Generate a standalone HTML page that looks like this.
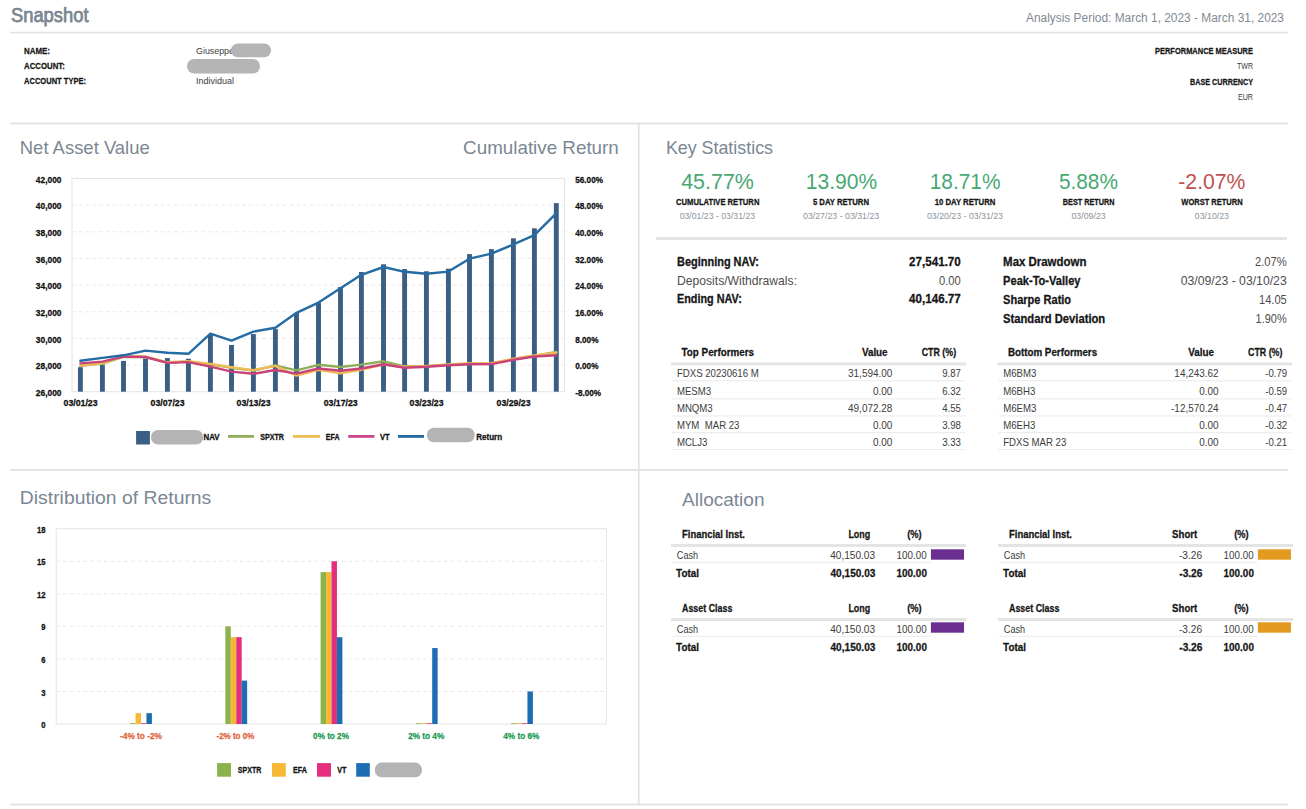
<!DOCTYPE html>
<html><head><meta charset="utf-8"><title>Snapshot</title>
<style>
html,body{margin:0;padding:0;background:#fff;}
body{width:1306px;height:809px;overflow:hidden;font-family:"Liberation Sans",sans-serif;}
svg{display:block;font-family:"Liberation Sans",sans-serif;}
</style></head><body>
<svg width="1306" height="809" viewBox="0 0 1306 809">
<rect width="1306" height="809" fill="#fff"/>
<text x="10.90" y="22.30" font-size="20.349" font-weight="400" fill="#7a858f" textLength="77.69" lengthAdjust="spacingAndGlyphs" stroke="#7a858f" stroke-width="0.75" stroke-linejoin="round">Snapshot</text>
<text x="1026.00" y="21.90" font-size="12.500" font-weight="400" fill="#7f8a94" textLength="258.00" lengthAdjust="spacingAndGlyphs">Analysis Period: March 1, 2023 - March 31, 2023</text>
<rect x="10.00" y="31.80" width="1278.00" height="1.50" fill="#e2e2e2"/>
<text x="24.00" y="53.90" font-size="9.738" font-weight="700" fill="#161616" textLength="25.90" lengthAdjust="spacingAndGlyphs" stroke="#161616" stroke-width="0.28" stroke-linejoin="round">NAME:</text>
<text x="24.00" y="68.90" font-size="9.738" font-weight="700" fill="#161616" textLength="40.80" lengthAdjust="spacingAndGlyphs" stroke="#161616" stroke-width="0.28" stroke-linejoin="round">ACCOUNT:</text>
<text x="24.00" y="84.20" font-size="9.738" font-weight="700" fill="#161616" textLength="62.00" lengthAdjust="spacingAndGlyphs" stroke="#161616" stroke-width="0.28" stroke-linejoin="round">ACCOUNT TYPE:</text>
<text x="196.00" y="54.00" font-size="9.012" font-weight="400" fill="#3c3c3c" textLength="38.00" lengthAdjust="spacingAndGlyphs">Giuseppe</text>
<rect x="231.00" y="43.60" width="40.00" height="13.60" fill="#b4b4b4" rx="6.8"/>
<rect x="187.00" y="59.00" width="73.00" height="14.50" fill="#b4b4b4" rx="7.2"/>
<text x="196.00" y="84.20" font-size="9.012" font-weight="400" fill="#3c3c3c" textLength="38.00" lengthAdjust="spacingAndGlyphs">Individual</text>
<text x="1155.00" y="53.70" font-size="9.738" font-weight="700" fill="#161616" textLength="98.00" lengthAdjust="spacingAndGlyphs" stroke="#161616" stroke-width="0.28" stroke-linejoin="round">PERFORMANCE MEASURE</text>
<text x="1237.00" y="69.00" font-size="9.012" font-weight="400" fill="#3c3c3c" textLength="16.00" lengthAdjust="spacingAndGlyphs">TWR</text>
<text x="1190.00" y="84.60" font-size="9.738" font-weight="700" fill="#161616" textLength="63.00" lengthAdjust="spacingAndGlyphs" stroke="#161616" stroke-width="0.28" stroke-linejoin="round">BASE CURRENCY</text>
<text x="1238.00" y="100.00" font-size="9.012" font-weight="400" fill="#3c3c3c" textLength="15.00" lengthAdjust="spacingAndGlyphs">EUR</text>
<rect x="10.00" y="122.60" width="1278.00" height="1.80" fill="#e2e2e2"/>
<rect x="10.00" y="469.00" width="1278.00" height="1.90" fill="#e2e2e2"/>
<rect x="10.00" y="803.60" width="1278.00" height="1.80" fill="#e2e2e2"/>
<rect x="638.00" y="124.00" width="1.60" height="680.00" fill="#e2e2e2"/>
<text x="19.80" y="153.90" font-size="19.041" font-weight="400" fill="#7b8793" textLength="129.90" lengthAdjust="spacingAndGlyphs">Net Asset Value</text>
<text x="463.10" y="154.10" font-size="19.041" font-weight="400" fill="#7b8793" textLength="155.71" lengthAdjust="spacingAndGlyphs">Cumulative Return</text>
<rect x="72.00" y="178.50" width="492.50" height="213.20" fill="none" stroke="#e4e4e4" stroke-width="1"/>
<line x1="72.00" y1="205.15" x2="564.00" y2="205.15" stroke="#e8e8e8" stroke-width="1.00" stroke-dasharray="3.7 3.1"/>
<line x1="72.00" y1="231.80" x2="564.00" y2="231.80" stroke="#e8e8e8" stroke-width="1.00" stroke-dasharray="3.7 3.1"/>
<line x1="72.00" y1="258.45" x2="564.00" y2="258.45" stroke="#e8e8e8" stroke-width="1.00" stroke-dasharray="3.7 3.1"/>
<line x1="72.00" y1="285.10" x2="564.00" y2="285.10" stroke="#e8e8e8" stroke-width="1.00" stroke-dasharray="3.7 3.1"/>
<line x1="72.00" y1="311.75" x2="564.00" y2="311.75" stroke="#e8e8e8" stroke-width="1.00" stroke-dasharray="3.7 3.1"/>
<line x1="72.00" y1="338.40" x2="564.00" y2="338.40" stroke="#e8e8e8" stroke-width="1.00" stroke-dasharray="3.7 3.1"/>
<line x1="72.00" y1="365.05" x2="564.00" y2="365.05" stroke="#e8e8e8" stroke-width="1.00" stroke-dasharray="3.7 3.1"/>
<text x="35.86" y="182.60" font-size="9.012" font-weight="700" fill="#111" textLength="25.63" lengthAdjust="spacingAndGlyphs" stroke="#111" stroke-width="0.28" stroke-linejoin="round">42,000</text>
<text x="35.86" y="209.25" font-size="9.012" font-weight="700" fill="#111" textLength="25.63" lengthAdjust="spacingAndGlyphs" stroke="#111" stroke-width="0.28" stroke-linejoin="round">40,000</text>
<text x="35.86" y="235.90" font-size="9.012" font-weight="700" fill="#111" textLength="25.63" lengthAdjust="spacingAndGlyphs" stroke="#111" stroke-width="0.28" stroke-linejoin="round">38,000</text>
<text x="35.86" y="262.55" font-size="9.012" font-weight="700" fill="#111" textLength="25.63" lengthAdjust="spacingAndGlyphs" stroke="#111" stroke-width="0.28" stroke-linejoin="round">36,000</text>
<text x="35.86" y="289.20" font-size="9.012" font-weight="700" fill="#111" textLength="25.63" lengthAdjust="spacingAndGlyphs" stroke="#111" stroke-width="0.28" stroke-linejoin="round">34,000</text>
<text x="35.86" y="315.85" font-size="9.012" font-weight="700" fill="#111" textLength="25.63" lengthAdjust="spacingAndGlyphs" stroke="#111" stroke-width="0.28" stroke-linejoin="round">32,000</text>
<text x="35.86" y="342.50" font-size="9.012" font-weight="700" fill="#111" textLength="25.63" lengthAdjust="spacingAndGlyphs" stroke="#111" stroke-width="0.28" stroke-linejoin="round">30,000</text>
<text x="35.86" y="369.15" font-size="9.012" font-weight="700" fill="#111" textLength="25.63" lengthAdjust="spacingAndGlyphs" stroke="#111" stroke-width="0.28" stroke-linejoin="round">28,000</text>
<text x="35.86" y="395.80" font-size="9.012" font-weight="700" fill="#111" textLength="25.63" lengthAdjust="spacingAndGlyphs" stroke="#111" stroke-width="0.28" stroke-linejoin="round">26,000</text>
<text x="575.20" y="182.60" font-size="9.012" font-weight="700" fill="#111" textLength="27.81" lengthAdjust="spacingAndGlyphs" stroke="#111" stroke-width="0.28" stroke-linejoin="round">56.00%</text>
<text x="575.20" y="209.25" font-size="9.012" font-weight="700" fill="#111" textLength="27.81" lengthAdjust="spacingAndGlyphs" stroke="#111" stroke-width="0.28" stroke-linejoin="round">48.00%</text>
<text x="575.20" y="235.90" font-size="9.012" font-weight="700" fill="#111" textLength="27.81" lengthAdjust="spacingAndGlyphs" stroke="#111" stroke-width="0.28" stroke-linejoin="round">40.00%</text>
<text x="575.20" y="262.55" font-size="9.012" font-weight="700" fill="#111" textLength="27.81" lengthAdjust="spacingAndGlyphs" stroke="#111" stroke-width="0.28" stroke-linejoin="round">32.00%</text>
<text x="575.20" y="289.20" font-size="9.012" font-weight="700" fill="#111" textLength="27.81" lengthAdjust="spacingAndGlyphs" stroke="#111" stroke-width="0.28" stroke-linejoin="round">24.00%</text>
<text x="575.20" y="315.85" font-size="9.012" font-weight="700" fill="#111" textLength="27.81" lengthAdjust="spacingAndGlyphs" stroke="#111" stroke-width="0.28" stroke-linejoin="round">16.00%</text>
<text x="575.20" y="342.50" font-size="9.012" font-weight="700" fill="#111" textLength="23.25" lengthAdjust="spacingAndGlyphs" stroke="#111" stroke-width="0.28" stroke-linejoin="round">8.00%</text>
<text x="575.20" y="369.15" font-size="9.012" font-weight="700" fill="#111" textLength="23.25" lengthAdjust="spacingAndGlyphs" stroke="#111" stroke-width="0.28" stroke-linejoin="round">0.00%</text>
<text x="575.20" y="395.80" font-size="9.012" font-weight="700" fill="#111" textLength="25.98" lengthAdjust="spacingAndGlyphs" stroke="#111" stroke-width="0.28" stroke-linejoin="round">-8.00%</text>
<rect x="77.95" y="367.20" width="4.90" height="24.50" fill="#3b5f84"/>
<rect x="99.95" y="364.40" width="4.90" height="27.30" fill="#3b5f84"/>
<rect x="121.05" y="360.90" width="4.90" height="30.80" fill="#3b5f84"/>
<rect x="143.05" y="358.50" width="4.90" height="33.20" fill="#3b5f84"/>
<rect x="164.95" y="358.10" width="4.90" height="33.60" fill="#3b5f84"/>
<rect x="185.95" y="358.80" width="4.90" height="32.90" fill="#3b5f84"/>
<rect x="207.95" y="335.00" width="4.90" height="56.70" fill="#3b5f84"/>
<rect x="229.05" y="345.00" width="4.90" height="46.70" fill="#3b5f84"/>
<rect x="250.95" y="334.10" width="4.90" height="57.60" fill="#3b5f84"/>
<rect x="272.95" y="329.10" width="4.90" height="62.60" fill="#3b5f84"/>
<rect x="294.05" y="313.00" width="4.90" height="78.70" fill="#3b5f84"/>
<rect x="316.05" y="302.60" width="4.90" height="89.10" fill="#3b5f84"/>
<rect x="338.05" y="287.00" width="4.90" height="104.70" fill="#3b5f84"/>
<rect x="358.95" y="272.00" width="4.90" height="119.70" fill="#3b5f84"/>
<rect x="381.05" y="264.30" width="4.90" height="127.40" fill="#3b5f84"/>
<rect x="402.15" y="269.10" width="4.90" height="122.60" fill="#3b5f84"/>
<rect x="423.95" y="271.30" width="4.90" height="120.40" fill="#3b5f84"/>
<rect x="445.95" y="268.70" width="4.90" height="123.00" fill="#3b5f84"/>
<rect x="467.05" y="254.10" width="4.90" height="137.60" fill="#3b5f84"/>
<rect x="488.95" y="249.10" width="4.90" height="142.60" fill="#3b5f84"/>
<rect x="510.95" y="238.30" width="4.90" height="153.40" fill="#3b5f84"/>
<rect x="531.95" y="228.30" width="4.90" height="163.40" fill="#3b5f84"/>
<rect x="553.85" y="203.10" width="4.90" height="188.60" fill="#3b5f84"/>
<text x="63.62" y="405.50" font-size="8.721" font-weight="700" fill="#111" textLength="33.95" lengthAdjust="spacingAndGlyphs" stroke="#111" stroke-width="0.28" stroke-linejoin="round">03/01/23</text>
<text x="150.62" y="405.50" font-size="8.721" font-weight="700" fill="#111" textLength="33.95" lengthAdjust="spacingAndGlyphs" stroke="#111" stroke-width="0.28" stroke-linejoin="round">03/07/23</text>
<text x="236.62" y="405.50" font-size="8.721" font-weight="700" fill="#111" textLength="33.95" lengthAdjust="spacingAndGlyphs" stroke="#111" stroke-width="0.28" stroke-linejoin="round">03/13/23</text>
<text x="323.72" y="405.50" font-size="8.721" font-weight="700" fill="#111" textLength="33.95" lengthAdjust="spacingAndGlyphs" stroke="#111" stroke-width="0.28" stroke-linejoin="round">03/17/23</text>
<text x="409.62" y="405.50" font-size="8.721" font-weight="700" fill="#111" textLength="33.95" lengthAdjust="spacingAndGlyphs" stroke="#111" stroke-width="0.28" stroke-linejoin="round">03/23/23</text>
<text x="496.62" y="405.50" font-size="8.721" font-weight="700" fill="#111" textLength="33.95" lengthAdjust="spacingAndGlyphs" stroke="#111" stroke-width="0.28" stroke-linejoin="round">03/29/23</text>
<path d="M80.40 365.90 L102.40 363.50 L123.50 356.80 L145.50 357.00 L167.40 362.60 L188.40 361.60 L210.40 364.40 L231.50 367.80 L253.40 370.60 L275.40 365.40 L296.50 370.30 L318.50 364.80 L340.50 367.00 L361.40 364.60 L383.50 361.30 L404.60 366.30 L426.40 366.30 L448.40 364.80 L469.50 363.80 L491.40 363.60 L513.40 359.20 L534.40 356.00 L556.30 351.90" fill="none" stroke="#8fae5a" stroke-width="2.40" stroke-linejoin="round" stroke-linecap="round"/>
<path d="M80.40 365.60 L102.40 363.20 L123.50 356.40 L145.50 356.60 L167.40 362.30 L188.40 361.30 L210.40 363.90 L231.50 367.20 L253.40 370.20 L275.40 365.90 L296.50 375.60 L318.50 369.80 L340.50 373.40 L361.40 369.70 L383.50 364.60 L404.60 366.80 L426.40 366.00 L448.40 364.50 L469.50 363.50 L491.40 363.30 L513.40 358.80 L534.40 355.50 L556.30 352.70" fill="none" stroke="#efbc55" stroke-width="2.40" stroke-linejoin="round" stroke-linecap="round"/>
<path d="M80.40 363.40 L102.40 361.60 L123.50 356.60 L145.50 357.00 L167.40 362.90 L188.40 362.10 L210.40 366.60 L231.50 371.60 L253.40 373.80 L275.40 370.00 L296.50 373.60 L318.50 368.50 L340.50 370.80 L361.40 368.50 L383.50 364.20 L404.60 367.80 L426.40 366.80 L448.40 365.30 L469.50 364.30 L491.40 364.10 L513.40 359.80 L534.40 356.50 L556.30 355.20" fill="none" stroke="#c9437a" stroke-width="2.40" stroke-linejoin="round" stroke-linecap="round"/>
<path d="M80.40 360.80 L102.40 357.90 L123.50 355.30 L145.50 350.60 L167.40 352.70 L188.40 353.80 L210.40 333.60 L231.50 340.60 L253.40 331.60 L275.40 327.70 L296.50 312.80 L318.50 302.60 L340.50 288.20 L361.40 274.80 L383.50 267.00 L404.60 271.80 L426.40 273.80 L448.40 271.60 L469.50 258.70 L491.40 253.70 L513.40 244.40 L534.40 235.20 L556.30 213.40" fill="none" stroke="#246ca3" stroke-width="2.40" stroke-linejoin="round" stroke-linecap="round"/>
<rect x="136.10" y="431.00" width="13.80" height="13.50" fill="#3b5f84"/>
<rect x="151.00" y="430.00" width="52.20" height="14.50" fill="#b4b4b4" rx="7.0"/>
<text x="203.50" y="439.60" font-size="9.012" font-weight="700" fill="#111" textLength="16.10" lengthAdjust="spacingAndGlyphs" stroke="#111" stroke-width="0.28" stroke-linejoin="round">NAV</text>
<rect x="228.00" y="435.00" width="26.00" height="2.80" fill="#8fae5a"/>
<text x="260.20" y="439.60" font-size="9.012" font-weight="700" fill="#111" textLength="23.80" lengthAdjust="spacingAndGlyphs" stroke="#111" stroke-width="0.28" stroke-linejoin="round">SPXTR</text>
<rect x="293.00" y="435.00" width="27.00" height="2.80" fill="#efbc55"/>
<text x="325.80" y="439.60" font-size="9.012" font-weight="700" fill="#111" textLength="13.80" lengthAdjust="spacingAndGlyphs" stroke="#111" stroke-width="0.28" stroke-linejoin="round">EFA</text>
<rect x="348.30" y="435.00" width="26.10" height="2.80" fill="#c9468b"/>
<text x="380.00" y="439.60" font-size="9.012" font-weight="700" fill="#111" textLength="9.70" lengthAdjust="spacingAndGlyphs" stroke="#111" stroke-width="0.28" stroke-linejoin="round">VT</text>
<rect x="398.00" y="435.00" width="26.00" height="2.80" fill="#2469a0"/>
<rect x="426.90" y="427.70" width="47.80" height="14.50" fill="#b4b4b4" rx="7.0"/>
<text x="476.20" y="439.60" font-size="9.012" font-weight="700" fill="#111" textLength="26.00" lengthAdjust="spacingAndGlyphs" stroke="#111" stroke-width="0.28" stroke-linejoin="round">Return</text>
<text x="665.90" y="153.70" font-size="18.314" font-weight="400" fill="#7b8793" textLength="107.10" lengthAdjust="spacingAndGlyphs">Key Statistics</text>
<text x="681.20" y="188.50" font-size="21.512" font-weight="400" fill="#47a873" textLength="72.69" lengthAdjust="spacingAndGlyphs">45.77%</text>
<text x="676.00" y="204.60" font-size="9.012" font-weight="700" fill="#161616" textLength="83.40" lengthAdjust="spacingAndGlyphs" stroke="#161616" stroke-width="0.28" stroke-linejoin="round">CUMULATIVE RETURN</text>
<text x="679.70" y="219.40" font-size="8.140" font-weight="400" fill="#8b949c" textLength="75.40" lengthAdjust="spacingAndGlyphs">03/01/23 - 03/31/23</text>
<text x="805.80" y="188.50" font-size="21.512" font-weight="400" fill="#47a873" textLength="71.39" lengthAdjust="spacingAndGlyphs">13.90%</text>
<text x="812.90" y="204.60" font-size="9.012" font-weight="700" fill="#161616" textLength="56.10" lengthAdjust="spacingAndGlyphs" stroke="#161616" stroke-width="0.28" stroke-linejoin="round">5 DAY RETURN</text>
<text x="803.00" y="219.40" font-size="8.140" font-weight="400" fill="#8b949c" textLength="76.20" lengthAdjust="spacingAndGlyphs">03/27/23 - 03/31/23</text>
<text x="929.70" y="188.50" font-size="21.512" font-weight="400" fill="#47a873" textLength="70.79" lengthAdjust="spacingAndGlyphs">18.71%</text>
<text x="934.70" y="204.60" font-size="9.012" font-weight="700" fill="#161616" textLength="60.70" lengthAdjust="spacingAndGlyphs" stroke="#161616" stroke-width="0.28" stroke-linejoin="round">10 DAY RETURN</text>
<text x="927.00" y="219.40" font-size="8.140" font-weight="400" fill="#8b949c" textLength="76.00" lengthAdjust="spacingAndGlyphs">03/20/23 - 03/31/23</text>
<text x="1058.90" y="188.50" font-size="21.512" font-weight="400" fill="#47a873" textLength="59.11" lengthAdjust="spacingAndGlyphs">5.88%</text>
<text x="1062.80" y="204.60" font-size="9.012" font-weight="700" fill="#161616" textLength="51.80" lengthAdjust="spacingAndGlyphs" stroke="#161616" stroke-width="0.28" stroke-linejoin="round">BEST RETURN</text>
<text x="1071.40" y="219.40" font-size="8.140" font-weight="400" fill="#8b949c" textLength="34.30" lengthAdjust="spacingAndGlyphs">03/09/23</text>
<text x="1178.30" y="188.50" font-size="21.512" font-weight="400" fill="#bd5250" textLength="67.11" lengthAdjust="spacingAndGlyphs">-2.07%</text>
<text x="1181.30" y="204.60" font-size="9.012" font-weight="700" fill="#161616" textLength="61.30" lengthAdjust="spacingAndGlyphs" stroke="#161616" stroke-width="0.28" stroke-linejoin="round">WORST RETURN</text>
<text x="1194.80" y="219.40" font-size="8.140" font-weight="400" fill="#8b949c" textLength="34.20" lengthAdjust="spacingAndGlyphs">03/10/23</text>
<rect x="656.00" y="237.00" width="631.00" height="3.00" fill="#e4e4e4"/>
<text x="677.00" y="265.80" font-size="11.919" font-weight="700" fill="#161616" textLength="82.00" lengthAdjust="spacingAndGlyphs" stroke="#161616" stroke-width="0.28" stroke-linejoin="round">Beginning NAV:</text>
<text x="677.00" y="284.50" font-size="11.919" font-weight="400" fill="#4d4d4d" textLength="120.00" lengthAdjust="spacingAndGlyphs">Deposits/Withdrawals:</text>
<text x="677.00" y="303.30" font-size="11.919" font-weight="700" fill="#161616" textLength="64.80" lengthAdjust="spacingAndGlyphs" stroke="#161616" stroke-width="0.28" stroke-linejoin="round">Ending NAV:</text>
<text x="909.10" y="265.80" font-size="11.919" font-weight="700" fill="#161616" textLength="51.70" lengthAdjust="spacingAndGlyphs" stroke="#161616" stroke-width="0.28" stroke-linejoin="round">27,541.70</text>
<text x="939.00" y="284.50" font-size="11.919" font-weight="400" fill="#4d4d4d" textLength="21.80" lengthAdjust="spacingAndGlyphs">0.00</text>
<text x="909.10" y="303.30" font-size="11.919" font-weight="700" fill="#161616" textLength="51.70" lengthAdjust="spacingAndGlyphs" stroke="#161616" stroke-width="0.28" stroke-linejoin="round">40,146.77</text>
<text x="1003.10" y="266.00" font-size="11.919" font-weight="700" fill="#161616" textLength="83.30" lengthAdjust="spacingAndGlyphs" stroke="#161616" stroke-width="0.28" stroke-linejoin="round">Max Drawdown</text>
<text x="1003.10" y="284.80" font-size="11.919" font-weight="700" fill="#161616" textLength="77.40" lengthAdjust="spacingAndGlyphs" stroke="#161616" stroke-width="0.28" stroke-linejoin="round">Peak-To-Valley</text>
<text x="1003.10" y="303.90" font-size="11.919" font-weight="700" fill="#161616" textLength="68.00" lengthAdjust="spacingAndGlyphs" stroke="#161616" stroke-width="0.28" stroke-linejoin="round">Sharpe Ratio</text>
<text x="1003.10" y="322.70" font-size="11.919" font-weight="700" fill="#161616" textLength="102.10" lengthAdjust="spacingAndGlyphs" stroke="#161616" stroke-width="0.28" stroke-linejoin="round">Standard Deviation</text>
<text x="1255.00" y="266.00" font-size="11.919" font-weight="400" fill="#4d4d4d" textLength="31.71" lengthAdjust="spacingAndGlyphs">2.07%</text>
<text x="1180.70" y="284.80" font-size="11.919" font-weight="400" fill="#4d4d4d" textLength="106.00" lengthAdjust="spacingAndGlyphs">03/09/23 - 03/10/23</text>
<text x="1259.00" y="303.90" font-size="11.919" font-weight="400" fill="#4d4d4d" textLength="27.71" lengthAdjust="spacingAndGlyphs">14.05</text>
<text x="1255.60" y="322.70" font-size="11.919" font-weight="400" fill="#4d4d4d" textLength="31.10" lengthAdjust="spacingAndGlyphs">1.90%</text>
<text x="681.60" y="355.50" font-size="11.483" font-weight="700" fill="#161616" textLength="72.40" lengthAdjust="spacingAndGlyphs" stroke="#161616" stroke-width="0.28" stroke-linejoin="round">Top Performers</text>
<text x="861.90" y="355.50" font-size="11.483" font-weight="700" fill="#161616" textLength="25.70" lengthAdjust="spacingAndGlyphs" stroke="#161616" stroke-width="0.28" stroke-linejoin="round">Value</text>
<text x="921.70" y="355.50" font-size="11.483" font-weight="700" fill="#161616" textLength="34.40" lengthAdjust="spacingAndGlyphs" stroke="#161616" stroke-width="0.28" stroke-linejoin="round">CTR (%)</text>
<rect x="671.00" y="362.40" width="295.00" height="3.00" fill="#e4e4e4"/>
<text x="676.90" y="376.70" font-size="10.465" font-weight="400" fill="#3c3c3c" textLength="81.88" lengthAdjust="spacingAndGlyphs">FDXS 20230616 M</text>
<text x="848.07" y="376.70" font-size="10.465" font-weight="400" fill="#3c3c3c" textLength="44.23" lengthAdjust="spacingAndGlyphs">31,594.00</text>
<text x="942.16" y="376.70" font-size="10.465" font-weight="400" fill="#3c3c3c" textLength="18.74" lengthAdjust="spacingAndGlyphs">9.87</text>
<rect x="672.00" y="380.20" width="293.00" height="1.10" fill="#ececec"/>
<text x="676.90" y="394.80" font-size="10.465" font-weight="400" fill="#3c3c3c" textLength="34.24" lengthAdjust="spacingAndGlyphs">MESM3</text>
<text x="872.95" y="394.80" font-size="10.465" font-weight="400" fill="#3c3c3c" textLength="19.35" lengthAdjust="spacingAndGlyphs">0.00</text>
<text x="942.16" y="394.80" font-size="10.465" font-weight="400" fill="#3c3c3c" textLength="18.74" lengthAdjust="spacingAndGlyphs">6.32</text>
<rect x="672.00" y="398.30" width="293.00" height="1.10" fill="#ececec"/>
<text x="676.90" y="411.90" font-size="10.465" font-weight="400" fill="#3c3c3c" textLength="35.84" lengthAdjust="spacingAndGlyphs">MNQM3</text>
<text x="848.07" y="411.90" font-size="10.465" font-weight="400" fill="#3c3c3c" textLength="44.23" lengthAdjust="spacingAndGlyphs">49,072.28</text>
<text x="942.16" y="411.90" font-size="10.465" font-weight="400" fill="#3c3c3c" textLength="18.74" lengthAdjust="spacingAndGlyphs">4.55</text>
<rect x="672.00" y="415.40" width="293.00" height="1.10" fill="#ececec"/>
<text x="676.90" y="428.60" font-size="10.465" font-weight="400" fill="#3c3c3c" textLength="62.59" lengthAdjust="spacingAndGlyphs">MYM  MAR 23</text>
<text x="872.95" y="428.60" font-size="10.465" font-weight="400" fill="#3c3c3c" textLength="19.35" lengthAdjust="spacingAndGlyphs">0.00</text>
<text x="942.16" y="428.60" font-size="10.465" font-weight="400" fill="#3c3c3c" textLength="18.74" lengthAdjust="spacingAndGlyphs">3.98</text>
<rect x="672.00" y="432.10" width="293.00" height="1.10" fill="#ececec"/>
<text x="676.90" y="445.50" font-size="10.465" font-weight="400" fill="#3c3c3c" textLength="30.50" lengthAdjust="spacingAndGlyphs">MCLJ3</text>
<text x="872.95" y="445.50" font-size="10.465" font-weight="400" fill="#3c3c3c" textLength="19.35" lengthAdjust="spacingAndGlyphs">0.00</text>
<text x="942.16" y="445.50" font-size="10.465" font-weight="400" fill="#3c3c3c" textLength="18.74" lengthAdjust="spacingAndGlyphs">3.33</text>
<rect x="672.00" y="449.00" width="293.00" height="1.10" fill="#ececec"/>
<text x="1007.90" y="355.50" font-size="11.483" font-weight="700" fill="#161616" textLength="89.20" lengthAdjust="spacingAndGlyphs" stroke="#161616" stroke-width="0.28" stroke-linejoin="round">Bottom Performers</text>
<text x="1188.20" y="355.50" font-size="11.483" font-weight="700" fill="#161616" textLength="25.70" lengthAdjust="spacingAndGlyphs" stroke="#161616" stroke-width="0.28" stroke-linejoin="round">Value</text>
<text x="1248.00" y="355.50" font-size="11.483" font-weight="700" fill="#161616" textLength="34.40" lengthAdjust="spacingAndGlyphs" stroke="#161616" stroke-width="0.28" stroke-linejoin="round">CTR (%)</text>
<rect x="997.30" y="362.40" width="295.00" height="3.00" fill="#e4e4e4"/>
<text x="1003.20" y="376.70" font-size="10.465" font-weight="400" fill="#3c3c3c" textLength="33.17" lengthAdjust="spacingAndGlyphs">M6BM3</text>
<text x="1174.37" y="376.70" font-size="10.465" font-weight="400" fill="#3c3c3c" textLength="44.23" lengthAdjust="spacingAndGlyphs">14,243.62</text>
<text x="1265.26" y="376.70" font-size="10.465" font-weight="400" fill="#3c3c3c" textLength="21.95" lengthAdjust="spacingAndGlyphs">-0.79</text>
<rect x="998.30" y="380.20" width="293.00" height="1.10" fill="#ececec"/>
<text x="1003.20" y="394.80" font-size="10.465" font-weight="400" fill="#3c3c3c" textLength="32.10" lengthAdjust="spacingAndGlyphs">M6BH3</text>
<text x="1199.25" y="394.80" font-size="10.465" font-weight="400" fill="#3c3c3c" textLength="19.35" lengthAdjust="spacingAndGlyphs">0.00</text>
<text x="1265.26" y="394.80" font-size="10.465" font-weight="400" fill="#3c3c3c" textLength="21.95" lengthAdjust="spacingAndGlyphs">-0.59</text>
<rect x="998.30" y="398.30" width="293.00" height="1.10" fill="#ececec"/>
<text x="1003.20" y="411.90" font-size="10.465" font-weight="400" fill="#3c3c3c" textLength="33.17" lengthAdjust="spacingAndGlyphs">M6EM3</text>
<text x="1171.06" y="411.90" font-size="10.465" font-weight="400" fill="#3c3c3c" textLength="47.54" lengthAdjust="spacingAndGlyphs">-12,570.24</text>
<text x="1265.26" y="411.90" font-size="10.465" font-weight="400" fill="#3c3c3c" textLength="21.95" lengthAdjust="spacingAndGlyphs">-0.47</text>
<rect x="998.30" y="415.40" width="293.00" height="1.10" fill="#ececec"/>
<text x="1003.20" y="428.60" font-size="10.465" font-weight="400" fill="#3c3c3c" textLength="32.10" lengthAdjust="spacingAndGlyphs">M6EH3</text>
<text x="1199.25" y="428.60" font-size="10.465" font-weight="400" fill="#3c3c3c" textLength="19.35" lengthAdjust="spacingAndGlyphs">0.00</text>
<text x="1265.26" y="428.60" font-size="10.465" font-weight="400" fill="#3c3c3c" textLength="21.95" lengthAdjust="spacingAndGlyphs">-0.32</text>
<rect x="998.30" y="432.10" width="293.00" height="1.10" fill="#ececec"/>
<text x="1003.20" y="445.50" font-size="10.465" font-weight="400" fill="#3c3c3c" textLength="63.13" lengthAdjust="spacingAndGlyphs">FDXS MAR 23</text>
<text x="1199.25" y="445.50" font-size="10.465" font-weight="400" fill="#3c3c3c" textLength="19.35" lengthAdjust="spacingAndGlyphs">0.00</text>
<text x="1265.26" y="445.50" font-size="10.465" font-weight="400" fill="#3c3c3c" textLength="21.95" lengthAdjust="spacingAndGlyphs">-0.21</text>
<rect x="998.30" y="449.00" width="293.00" height="1.10" fill="#ececec"/>
<text x="19.80" y="503.90" font-size="18.023" font-weight="400" fill="#7b8793" textLength="191.50" lengthAdjust="spacingAndGlyphs">Distribution of Returns</text>
<rect x="56.20" y="528.70" width="550.20" height="195.30" fill="none" stroke="#e4e4e4" stroke-width="1"/>
<line x1="56.20" y1="691.45" x2="605.90" y2="691.45" stroke="#e8e8e8" stroke-width="1.00" stroke-dasharray="3.7 3.1"/>
<line x1="56.20" y1="658.90" x2="605.90" y2="658.90" stroke="#e8e8e8" stroke-width="1.00" stroke-dasharray="3.7 3.1"/>
<line x1="56.20" y1="626.35" x2="605.90" y2="626.35" stroke="#e8e8e8" stroke-width="1.00" stroke-dasharray="3.7 3.1"/>
<line x1="56.20" y1="593.80" x2="605.90" y2="593.80" stroke="#e8e8e8" stroke-width="1.00" stroke-dasharray="3.7 3.1"/>
<line x1="56.20" y1="561.25" x2="605.90" y2="561.25" stroke="#e8e8e8" stroke-width="1.00" stroke-dasharray="3.7 3.1"/>
<text x="41.34" y="728.10" font-size="9.012" font-weight="700" fill="#111" textLength="4.26" lengthAdjust="spacingAndGlyphs" stroke="#111" stroke-width="0.28" stroke-linejoin="round">0</text>
<text x="41.34" y="695.55" font-size="9.012" font-weight="700" fill="#111" textLength="4.26" lengthAdjust="spacingAndGlyphs" stroke="#111" stroke-width="0.28" stroke-linejoin="round">3</text>
<text x="41.34" y="663.00" font-size="9.012" font-weight="700" fill="#111" textLength="4.26" lengthAdjust="spacingAndGlyphs" stroke="#111" stroke-width="0.28" stroke-linejoin="round">6</text>
<text x="41.34" y="630.45" font-size="9.012" font-weight="700" fill="#111" textLength="4.26" lengthAdjust="spacingAndGlyphs" stroke="#111" stroke-width="0.28" stroke-linejoin="round">9</text>
<text x="37.08" y="597.90" font-size="9.012" font-weight="700" fill="#111" textLength="8.52" lengthAdjust="spacingAndGlyphs" stroke="#111" stroke-width="0.28" stroke-linejoin="round">12</text>
<text x="37.08" y="565.35" font-size="9.012" font-weight="700" fill="#111" textLength="8.52" lengthAdjust="spacingAndGlyphs" stroke="#111" stroke-width="0.28" stroke-linejoin="round">15</text>
<text x="37.08" y="532.80" font-size="9.012" font-weight="700" fill="#111" textLength="8.52" lengthAdjust="spacingAndGlyphs" stroke="#111" stroke-width="0.28" stroke-linejoin="round">18</text>
<rect x="130.10" y="723.20" width="5.45" height="0.80" fill="#8cb24b"/>
<rect x="135.55" y="713.15" width="5.45" height="10.85" fill="#f6b836"/>
<rect x="141.00" y="723.20" width="5.45" height="0.80" fill="#e4307c"/>
<rect x="146.45" y="713.15" width="5.45" height="10.85" fill="#1d6db2"/>
<rect x="225.35" y="626.35" width="5.45" height="97.65" fill="#8cb24b"/>
<rect x="230.80" y="637.20" width="5.45" height="86.80" fill="#f6b836"/>
<rect x="236.25" y="637.20" width="5.45" height="86.80" fill="#e4307c"/>
<rect x="241.70" y="680.60" width="5.45" height="43.40" fill="#1d6db2"/>
<rect x="320.60" y="572.10" width="5.45" height="151.90" fill="#8cb24b"/>
<rect x="326.05" y="572.10" width="5.45" height="151.90" fill="#f6b836"/>
<rect x="331.50" y="561.25" width="5.45" height="162.75" fill="#e4307c"/>
<rect x="336.95" y="637.20" width="5.45" height="86.80" fill="#1d6db2"/>
<rect x="415.85" y="723.20" width="5.45" height="0.80" fill="#8cb24b"/>
<rect x="421.30" y="723.20" width="5.45" height="0.80" fill="#f6b836"/>
<rect x="426.75" y="723.20" width="5.45" height="0.80" fill="#e4307c"/>
<rect x="432.20" y="648.05" width="5.45" height="75.95" fill="#1d6db2"/>
<rect x="511.10" y="723.20" width="5.45" height="0.80" fill="#8cb24b"/>
<rect x="516.55" y="723.20" width="5.45" height="0.80" fill="#f6b836"/>
<rect x="522.00" y="723.20" width="5.45" height="0.80" fill="#e4307c"/>
<rect x="527.45" y="691.45" width="5.45" height="32.55" fill="#1d6db2"/>
<text x="120.00" y="738.70" font-size="9.012" font-weight="700" fill="#e0643c" textLength="42.00" lengthAdjust="spacingAndGlyphs" stroke="#e0643c" stroke-width="0.28" stroke-linejoin="round">-4% to -2%</text>
<text x="216.50" y="738.70" font-size="9.012" font-weight="700" fill="#e0643c" textLength="37.80" lengthAdjust="spacingAndGlyphs" stroke="#e0643c" stroke-width="0.28" stroke-linejoin="round">-2% to 0%</text>
<text x="313.10" y="738.70" font-size="9.012" font-weight="700" fill="#20994f" textLength="35.80" lengthAdjust="spacingAndGlyphs" stroke="#20994f" stroke-width="0.28" stroke-linejoin="round">0% to 2%</text>
<text x="408.15" y="738.70" font-size="9.012" font-weight="700" fill="#20994f" textLength="36.10" lengthAdjust="spacingAndGlyphs" stroke="#20994f" stroke-width="0.28" stroke-linejoin="round">2% to 4%</text>
<text x="503.25" y="738.70" font-size="9.012" font-weight="700" fill="#20994f" textLength="36.10" lengthAdjust="spacingAndGlyphs" stroke="#20994f" stroke-width="0.28" stroke-linejoin="round">4% to 6%</text>
<rect x="217.10" y="763.10" width="13.90" height="13.60" fill="#8cb24b"/>
<text x="237.80" y="773.20" font-size="9.012" font-weight="700" fill="#111" textLength="23.60" lengthAdjust="spacingAndGlyphs" stroke="#111" stroke-width="0.28" stroke-linejoin="round">SPXTR</text>
<rect x="272.00" y="763.10" width="13.80" height="13.60" fill="#f6b836"/>
<text x="292.90" y="773.20" font-size="9.012" font-weight="700" fill="#111" textLength="14.00" lengthAdjust="spacingAndGlyphs" stroke="#111" stroke-width="0.28" stroke-linejoin="round">EFA</text>
<rect x="317.00" y="763.10" width="14.00" height="13.60" fill="#e4307c"/>
<text x="337.20" y="773.20" font-size="9.012" font-weight="700" fill="#111" textLength="9.30" lengthAdjust="spacingAndGlyphs" stroke="#111" stroke-width="0.28" stroke-linejoin="round">VT</text>
<rect x="356.20" y="763.10" width="13.60" height="13.60" fill="#1d6db2"/>
<rect x="374.80" y="762.60" width="47.20" height="14.70" fill="#b4b4b4" rx="7.0"/>
<text x="682.00" y="505.80" font-size="18.750" font-weight="400" fill="#7b8793" textLength="82.50" lengthAdjust="spacingAndGlyphs">Allocation</text>
<text x="682.00" y="537.50" font-size="11.483" font-weight="700" fill="#161616" textLength="63.00" lengthAdjust="spacingAndGlyphs" stroke="#161616" stroke-width="0.28" stroke-linejoin="round">Financial Inst.</text>
<text x="848.40" y="537.50" font-size="11.483" font-weight="700" fill="#161616" textLength="21.80" lengthAdjust="spacingAndGlyphs" stroke="#161616" stroke-width="0.28" stroke-linejoin="round">Long</text>
<text x="907.20" y="537.50" font-size="11.483" font-weight="700" fill="#161616" textLength="14.50" lengthAdjust="spacingAndGlyphs" stroke="#161616" stroke-width="0.28" stroke-linejoin="round">(%)</text>
<rect x="671.00" y="544.00" width="295.00" height="3.00" fill="#e4e4e4"/>
<text x="676.80" y="558.70" font-size="10.174" font-weight="400" fill="#3c3c3c" textLength="21.30" lengthAdjust="spacingAndGlyphs">Cash</text>
<text x="830.20" y="558.70" font-size="10.174" font-weight="400" fill="#3c3c3c" textLength="44.90" lengthAdjust="spacingAndGlyphs">40,150.03</text>
<text x="896.60" y="558.70" font-size="10.174" font-weight="400" fill="#3c3c3c" textLength="30.00" lengthAdjust="spacingAndGlyphs">100.00</text>
<rect x="930.90" y="549.30" width="33.10" height="10.40" fill="#6a2f90"/>
<rect x="672.00" y="561.80" width="258.50" height="1.00" fill="#ececec"/>
<text x="676.10" y="576.70" font-size="10.756" font-weight="700" fill="#161616" textLength="22.90" lengthAdjust="spacingAndGlyphs" stroke="#161616" stroke-width="0.28" stroke-linejoin="round">Total</text>
<text x="830.50" y="576.70" font-size="10.756" font-weight="700" fill="#161616" textLength="44.90" lengthAdjust="spacingAndGlyphs" stroke="#161616" stroke-width="0.28" stroke-linejoin="round">40,150.03</text>
<text x="896.60" y="576.70" font-size="10.756" font-weight="700" fill="#161616" textLength="30.30" lengthAdjust="spacingAndGlyphs" stroke="#161616" stroke-width="0.28" stroke-linejoin="round">100.00</text>
<text x="682.00" y="611.50" font-size="11.483" font-weight="700" fill="#161616" textLength="50.40" lengthAdjust="spacingAndGlyphs" stroke="#161616" stroke-width="0.28" stroke-linejoin="round">Asset Class</text>
<text x="848.40" y="611.50" font-size="11.483" font-weight="700" fill="#161616" textLength="21.80" lengthAdjust="spacingAndGlyphs" stroke="#161616" stroke-width="0.28" stroke-linejoin="round">Long</text>
<text x="907.20" y="611.50" font-size="11.483" font-weight="700" fill="#161616" textLength="14.50" lengthAdjust="spacingAndGlyphs" stroke="#161616" stroke-width="0.28" stroke-linejoin="round">(%)</text>
<rect x="671.00" y="618.00" width="295.00" height="3.00" fill="#e4e4e4"/>
<text x="676.80" y="632.70" font-size="10.174" font-weight="400" fill="#3c3c3c" textLength="21.30" lengthAdjust="spacingAndGlyphs">Cash</text>
<text x="830.20" y="632.70" font-size="10.174" font-weight="400" fill="#3c3c3c" textLength="44.90" lengthAdjust="spacingAndGlyphs">40,150.03</text>
<text x="896.60" y="632.70" font-size="10.174" font-weight="400" fill="#3c3c3c" textLength="30.00" lengthAdjust="spacingAndGlyphs">100.00</text>
<rect x="930.90" y="622.30" width="33.10" height="10.40" fill="#6a2f90"/>
<rect x="672.00" y="635.80" width="258.50" height="1.00" fill="#ececec"/>
<text x="676.10" y="650.70" font-size="10.756" font-weight="700" fill="#161616" textLength="22.90" lengthAdjust="spacingAndGlyphs" stroke="#161616" stroke-width="0.28" stroke-linejoin="round">Total</text>
<text x="830.50" y="650.70" font-size="10.756" font-weight="700" fill="#161616" textLength="44.90" lengthAdjust="spacingAndGlyphs" stroke="#161616" stroke-width="0.28" stroke-linejoin="round">40,150.03</text>
<text x="896.60" y="650.70" font-size="10.756" font-weight="700" fill="#161616" textLength="30.30" lengthAdjust="spacingAndGlyphs" stroke="#161616" stroke-width="0.28" stroke-linejoin="round">100.00</text>
<text x="1009.00" y="537.50" font-size="11.483" font-weight="700" fill="#161616" textLength="63.00" lengthAdjust="spacingAndGlyphs" stroke="#161616" stroke-width="0.28" stroke-linejoin="round">Financial Inst.</text>
<text x="1172.10" y="537.50" font-size="11.483" font-weight="700" fill="#161616" textLength="25.10" lengthAdjust="spacingAndGlyphs" stroke="#161616" stroke-width="0.28" stroke-linejoin="round">Short</text>
<text x="1234.20" y="537.50" font-size="11.483" font-weight="700" fill="#161616" textLength="14.50" lengthAdjust="spacingAndGlyphs" stroke="#161616" stroke-width="0.28" stroke-linejoin="round">(%)</text>
<rect x="998.00" y="544.00" width="295.00" height="3.00" fill="#e4e4e4"/>
<text x="1003.80" y="558.70" font-size="10.174" font-weight="400" fill="#3c3c3c" textLength="21.30" lengthAdjust="spacingAndGlyphs">Cash</text>
<text x="1179.00" y="558.70" font-size="10.174" font-weight="400" fill="#3c3c3c" textLength="23.10" lengthAdjust="spacingAndGlyphs">-3.26</text>
<text x="1223.60" y="558.70" font-size="10.174" font-weight="400" fill="#3c3c3c" textLength="30.00" lengthAdjust="spacingAndGlyphs">100.00</text>
<rect x="1257.90" y="549.30" width="33.10" height="10.40" fill="#e39a20"/>
<rect x="999.00" y="561.80" width="258.50" height="1.00" fill="#ececec"/>
<text x="1003.10" y="576.70" font-size="10.756" font-weight="700" fill="#161616" textLength="22.90" lengthAdjust="spacingAndGlyphs" stroke="#161616" stroke-width="0.28" stroke-linejoin="round">Total</text>
<text x="1179.30" y="576.70" font-size="10.756" font-weight="700" fill="#161616" textLength="23.10" lengthAdjust="spacingAndGlyphs" stroke="#161616" stroke-width="0.28" stroke-linejoin="round">-3.26</text>
<text x="1223.60" y="576.70" font-size="10.756" font-weight="700" fill="#161616" textLength="30.30" lengthAdjust="spacingAndGlyphs" stroke="#161616" stroke-width="0.28" stroke-linejoin="round">100.00</text>
<text x="1009.00" y="611.50" font-size="11.483" font-weight="700" fill="#161616" textLength="50.40" lengthAdjust="spacingAndGlyphs" stroke="#161616" stroke-width="0.28" stroke-linejoin="round">Asset Class</text>
<text x="1172.10" y="611.50" font-size="11.483" font-weight="700" fill="#161616" textLength="25.10" lengthAdjust="spacingAndGlyphs" stroke="#161616" stroke-width="0.28" stroke-linejoin="round">Short</text>
<text x="1234.20" y="611.50" font-size="11.483" font-weight="700" fill="#161616" textLength="14.50" lengthAdjust="spacingAndGlyphs" stroke="#161616" stroke-width="0.28" stroke-linejoin="round">(%)</text>
<rect x="998.00" y="618.00" width="295.00" height="3.00" fill="#e4e4e4"/>
<text x="1003.80" y="632.70" font-size="10.174" font-weight="400" fill="#3c3c3c" textLength="21.30" lengthAdjust="spacingAndGlyphs">Cash</text>
<text x="1179.00" y="632.70" font-size="10.174" font-weight="400" fill="#3c3c3c" textLength="23.10" lengthAdjust="spacingAndGlyphs">-3.26</text>
<text x="1223.60" y="632.70" font-size="10.174" font-weight="400" fill="#3c3c3c" textLength="30.00" lengthAdjust="spacingAndGlyphs">100.00</text>
<rect x="1257.90" y="622.30" width="33.10" height="10.40" fill="#e39a20"/>
<rect x="999.00" y="635.80" width="258.50" height="1.00" fill="#ececec"/>
<text x="1003.10" y="650.70" font-size="10.756" font-weight="700" fill="#161616" textLength="22.90" lengthAdjust="spacingAndGlyphs" stroke="#161616" stroke-width="0.28" stroke-linejoin="round">Total</text>
<text x="1179.30" y="650.70" font-size="10.756" font-weight="700" fill="#161616" textLength="23.10" lengthAdjust="spacingAndGlyphs" stroke="#161616" stroke-width="0.28" stroke-linejoin="round">-3.26</text>
<text x="1223.60" y="650.70" font-size="10.756" font-weight="700" fill="#161616" textLength="30.30" lengthAdjust="spacingAndGlyphs" stroke="#161616" stroke-width="0.28" stroke-linejoin="round">100.00</text>
</svg>
</body></html>
